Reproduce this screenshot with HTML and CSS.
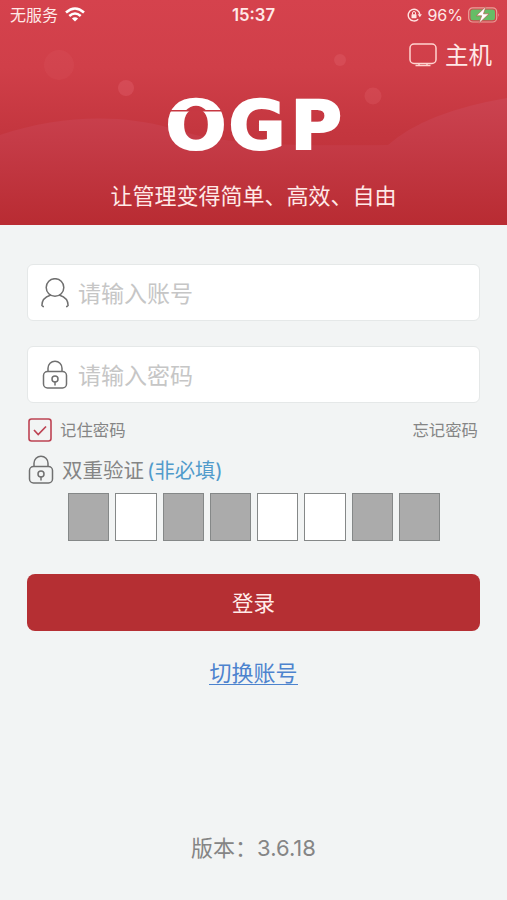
FILE: index.html
```html
<!DOCTYPE html>
<html lang="zh-CN">
<head>
<meta charset="utf-8">
<meta name="viewport" content="width=device-width, initial-scale=1">
<title>OGP</title>
<link rel="stylesheet" href="styles.css">
</head>
<body>
<header class="hero">
  <svg class="hero-art" viewBox="0 0 507 225" preserveAspectRatio="none" aria-hidden="true">
    <defs>
      <linearGradient id="hill" gradientUnits="userSpaceOnUse" x1="0" y1="98" x2="0" y2="222"><stop stop-color="#cb4350"/><stop offset=".35" stop-color="#c53b47"/><stop offset="1" stop-color="#b92c33"/></linearGradient>
    </defs>
    <path fill="url(#hill)" d="M0 135C60 115 120 114 170 128C225 146 290 146 388 145Q425 112 507 98V225H0Z"/>
    <g fill="#e9717c">
      <circle cx="59" cy="65" r="15" opacity=".1"/>
      <circle cx="126" cy="88" r="8" opacity=".28"/>
      <circle cx="340" cy="60" r="6" opacity=".25"/>
      <circle cx="373" cy="96" r="8.5" opacity=".2"/>
    </g>
  </svg>
  <div class="status">
    <div class="status-left">
      <span>无服务</span>
      <svg width="20" height="15" viewBox="0 0 20 15" fill="none" stroke="#fff" stroke-width="2.6"><path d="M1 5.4Q10-2.4 19 5.4M4.3 8.9Q10 4.1 15.7 8.9"/><path d="M10 14.6L6.9 11.6Q10 9 13.1 11.6Z" fill="#fff" stroke="none"/></svg>
    </div>
    <time class="clock">15:37</time>
    <div class="status-right">
      <svg width="15" height="14" viewBox="0 0 15 14" fill="none" stroke="#ffe4e2" stroke-width="1.4"><path d="M11.2 11.2A5.8 5.8 0 1 1 12.8 6.4"/><path d="M10.7 6.2h4.2l-2.1 3z" fill="#ffe4e2" stroke="none"/><rect x="4.5" y="6.2" width="5" height="4" rx=".6" fill="#ffe4e2" stroke="none"/><path d="M5.5 6.5V5a1.5 1.5 0 0 1 3 0v1.5" stroke-width="1"/></svg>
      <span class="percent">96%</span>
      <svg width="32" height="18" viewBox="0 0 32 18"><rect x=".7" y="1.8" width="28" height="14.2" rx="4" fill="none" stroke="#e9a199" stroke-width="1.2"/><rect x="2.4" y="3.5" width="24.6" height="10.8" rx="2.5" fill="#66bd66"/><path d="M30.4 7v4q1.4-2 0-4" fill="#e9a199"/><path d="M18 .4L8.3 9.8h5.4L10.8 17.6l10.2-9.8h-5.5z" fill="#fff" stroke="#b6604e" stroke-width=".7"/></svg>
    </div>
  </div>
  <div class="host">
    <svg width="28" height="24" viewBox="0 0 28 24" fill="none" stroke="#ffd4d0" stroke-width="1.5"><rect x="1" y="1" width="26" height="19.5" rx="4"/><path d="M10 20.5v2M18 20.5v2M6.5 22.6h15"/></svg>
    <span>主机</span>
  </div>
  <svg class="logo" width="190" height="96" viewBox="0 -16 190 96" role="img" aria-label="OGP">
    <g class="logo-text">
      <text x="1.5" y="56.5" textLength="61" lengthAdjust="spacingAndGlyphs">O</text>
      <text x="64.5" y="56.5" textLength="57" lengthAdjust="spacingAndGlyphs">G</text>
      <text x="126.5" y="56.5" textLength="51.5" lengthAdjust="spacingAndGlyphs">P</text>
    </g>
    <path d="M21 19Q32 8.5 43 19Z" fill="#c73842"/>
    <path d="M6 18.7H57" stroke="#c73842" stroke-width="1.6"/>
  </svg>
  <p class="slogan">让管理变得简单、高效、自由</p>
</header>
<main class="form">
  <div class="field">
    <svg width="28" height="30" viewBox="0 0 28 30" class="line-icon"><circle cx="14" cy="9.5" r="8.8"/><path d="M9.3 17.2C3.5 19 .9 23.2 .9 27.4L2.3 28.6M18.7 17.2C24.5 19 27.1 23.2 27.1 27.4L25.7 28.6"/></svg>
    <span>请输入账号</span>
  </div>
  <div class="field">
    <svg width="28" height="30" viewBox="0 0 28 30" class="line-icon"><rect x="2.5" y="11.5" width="23" height="16.5" rx="4"/><path d="M7 11V8.2a7 7 0 0 1 14 0V11M14 22v3"/><circle cx="14" cy="19" r="3"/></svg>
    <span>请输入密码</span>
  </div>
  <div class="options">
    <div class="remember">
      <svg width="24" height="24" viewBox="0 0 24 24" fill="none" stroke="#bd4353"><rect x="1" y="1" width="22" height="22" rx="2.5" stroke-width="1.6"/><path d="M6 12l4.2 4.5L18 8.5" stroke-width="1.7"/></svg>
      <span>记住密码</span>
    </div>
    <span>忘记密码</span>
  </div>
  <div class="verify">
    <svg width="28" height="30" viewBox="0 0 28 30" class="line-icon"><rect x="2.5" y="11.5" width="23" height="16.5" rx="4"/><path d="M7 11V8.2a7 7 0 0 1 14 0V11M14 22v3"/><circle cx="14" cy="19" r="3"/></svg>
    <span>双重验证</span>
    <span class="optional">(非必填)</span>
  </div>
  <div class="code">
    <i class="off"></i><i></i><i class="off"></i><i class="off"></i><i></i><i></i><i class="off"></i><i class="off"></i>
  </div>
  <button class="login" type="button">登录</button>
  <a class="switch">切换账号</a>
</main>
<footer class="version"><span>版本：</span><span class="number">3.6.18</span></footer>
</body>
</html>
```

FILE: styles.css
```css
* { box-sizing: border-box; }
body {
  margin: 0;
  height: 900px;
  display: flex;
  flex-direction: column;
  overflow: hidden;
  background: #f2f4f4;
  color: #858585;
  font-family: Inter, "Noto Sans CJK SC", sans-serif;
  font-weight: 400;
}
svg { display: block; flex: none; }
span, p, a, time { white-space: nowrap; line-height: 1; }

.hero {
  position: relative;
  height: 225px;
  flex: none;
  background: linear-gradient(#d5424d, #d03f49 30%, #c4363f 58%, #b92c33);
  color: #ffe9e7;
}
.hero > * { position: relative; }
.hero > .hero-art { position: absolute; inset: 0; width: 100%; height: 100%; }
.status {
  display: grid;
  grid-template-columns: 1fr auto 1fr;
  align-items: center;
  height: 29px;
  padding: 0 7px 0 10px;
  font-size: 16px;
}
.status-left { display: flex; align-items: center; gap: 7px; }
.clock { padding-top: 1px; margin-right: 3px; font-size: 16.7px; font-weight: 600; }
.status-right { display: flex; align-items: center; justify-content: flex-end; gap: 5px; }
.percent { font-size: 16px; }
.host {
  display: flex;
  align-items: center;
  justify-content: flex-end;
  gap: 8px;
  height: 52px;
  padding-right: 15px;
  font-size: 23.5px;
}
.host span { padding-top: 2px; }
.logo { margin: -5px 0 0 164px; }
.logo-text {
  fill: #fff;
  stroke: #fff;
  stroke-width: 2;
  font: bold 67px "DejaVu Sans", sans-serif;
}
.slogan { margin: 13px 0 0; text-align: center; font-size: 22px; }

.form { display: flex; flex-direction: column; padding: 39px 27px 0; }
.field {
  display: flex;
  align-items: center;
  gap: 9px;
  height: 57px;
  margin-bottom: 25px;
  padding-left: 13px;
  border: 1px solid #e5e8e8;
  border-radius: 6px;
  background: #fff;
  color: #c6c6c6;
  font-size: 23px;
}
.field span { padding-top: 3px; }
.line-icon { fill: none; stroke: #707070; stroke-width: 1.5; stroke-linecap: round; }
.options {
  display: flex;
  align-items: center;
  justify-content: space-between;
  height: 24px;
  margin: -10px 2px 0 1px;
  font-size: 16.4px;
}
.remember { display: flex; align-items: center; gap: 8px; }
.verify {
  display: flex;
  align-items: center;
  height: 30px;
  margin-top: 13px;
  font-size: 20.5px;
}
.verify span { padding-top: 2px; }
.verify .line-icon { margin-right: 7px; }
.optional { margin-left: 3px; color: #519bcb; font-size: 20.3px; }
.code {
  display: grid;
  grid-template-columns: repeat(8, 1fr);
  gap: 6px;
  height: 48px;
  margin: 8px 40px 0 41px;
}
.code i { border: 1px solid #858888; background: #fff; }
.code .off { background: #ababab; }
.login {
  height: 57px;
  margin-top: 33px;
  border: 0;
  border-radius: 8px;
  background: #b52f33;
  color: #ffebe9;
  font: 21.5px "Noto Sans CJK SC", sans-serif;
  padding: 0 0 3px;
}
.switch {
  align-self: center;
  margin-top: 30px;
  padding-top: 1px;
  color: #4d83ce;
  font-size: 22px;
  border-bottom: 1.5px solid #4d83ce;
}
.version {
  display: flex;
  justify-content: center;
  align-items: center;
  margin: auto 0 41px;
  font-size: 22px;
}
```
